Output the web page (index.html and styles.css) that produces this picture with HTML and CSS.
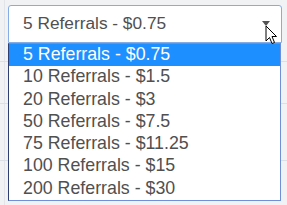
FILE: index.html
```
<html>

<head>
<meta charset="utf-8">
<link rel="stylesheet" href="styles.css">
</head>

<body>

<div class="field">
<div class="select">
<span>5 Referrals - $0.75</span>
<span class="caret"></span>
</div>
<ul class="options">
<li class="picked">5 Referrals - $0.75</li>
<li>10 Referrals - $1.5</li>
<li>20 Referrals - $3</li>
<li>50 Referrals - $7.5</li>
<li>75 Referrals - $11.25</li>
<li>100 Referrals - $15</li>
<li>200 Referrals - $30</li>
</ul>
<svg class="cursor" width="13" height="21" viewBox="0 0 13 21">
<path d="M1 1 L1 16 L4.5 12.5 L7 18.5 L9.5 17.5 L7 11.5 L11.5 11.5 Z" fill="#fff" stroke="#000" stroke-width="1" stroke-linejoin="round"/>
</svg>
</div>

</body>

</html>
```

FILE: styles.css
```
html
{
	font-family: "Liberation Sans", Arial, sans-serif;
}

body
{
	margin: 0;
	background-color: #f1f2f4;
	background-image:
		linear-gradient(#dcdfe3, #dcdfe3),
		linear-gradient(#dcdfe3, #dcdfe3),
		linear-gradient(#dcdfe3, #dcdfe3),
		linear-gradient(#e2e4e8, #e2e4e8);
	background-size: 100% 1px, 100% 1px, 100% 1px, 1px 100%;
	background-position: 0 61px, 0 103px, 0 160px, 4px 0;
	background-repeat: no-repeat;
	height: 205px;
	overflow: hidden;
}

.field
{
	position: relative;
	padding: 5px 5px 0 8px;
}

.select
{
	display: flex;
	align-items: center;
	justify-content: space-between;
	box-sizing: border-box;
	height: 38px;
	padding: 0 11px 2px 14px;
	background-color: #FFFFFF;
	border: solid 1px #86ace6;
	border-radius: 3px 3px 0 0;
	font-size: 17.3px;
	color: #505050;
}

.caret
{
	width: 0;
	height: 0;
	border-left: 4px solid transparent;
	border-right: 4px solid transparent;
	border-top: 5px solid #555555;
	margin-top: 1px;
}

.options
{
	margin: 0 1px 0 0;
	padding: 0;
	list-style: none;
	background-color: #FFFFFF;
	border: solid 1px #6f8fd6;
	border-left-color: #2f3f72;
	font-size: 17.8px;
	color: #505050;
}

.options li
{
	height: 22.3px;
	line-height: 20px;
	padding-left: 14px;
}

.options .picked
{
	background-color: #1e8fff;
	color: #FFFFFF;
}

.cursor
{
	position: absolute;
	left: 265px;
	top: 25px;
}
```
